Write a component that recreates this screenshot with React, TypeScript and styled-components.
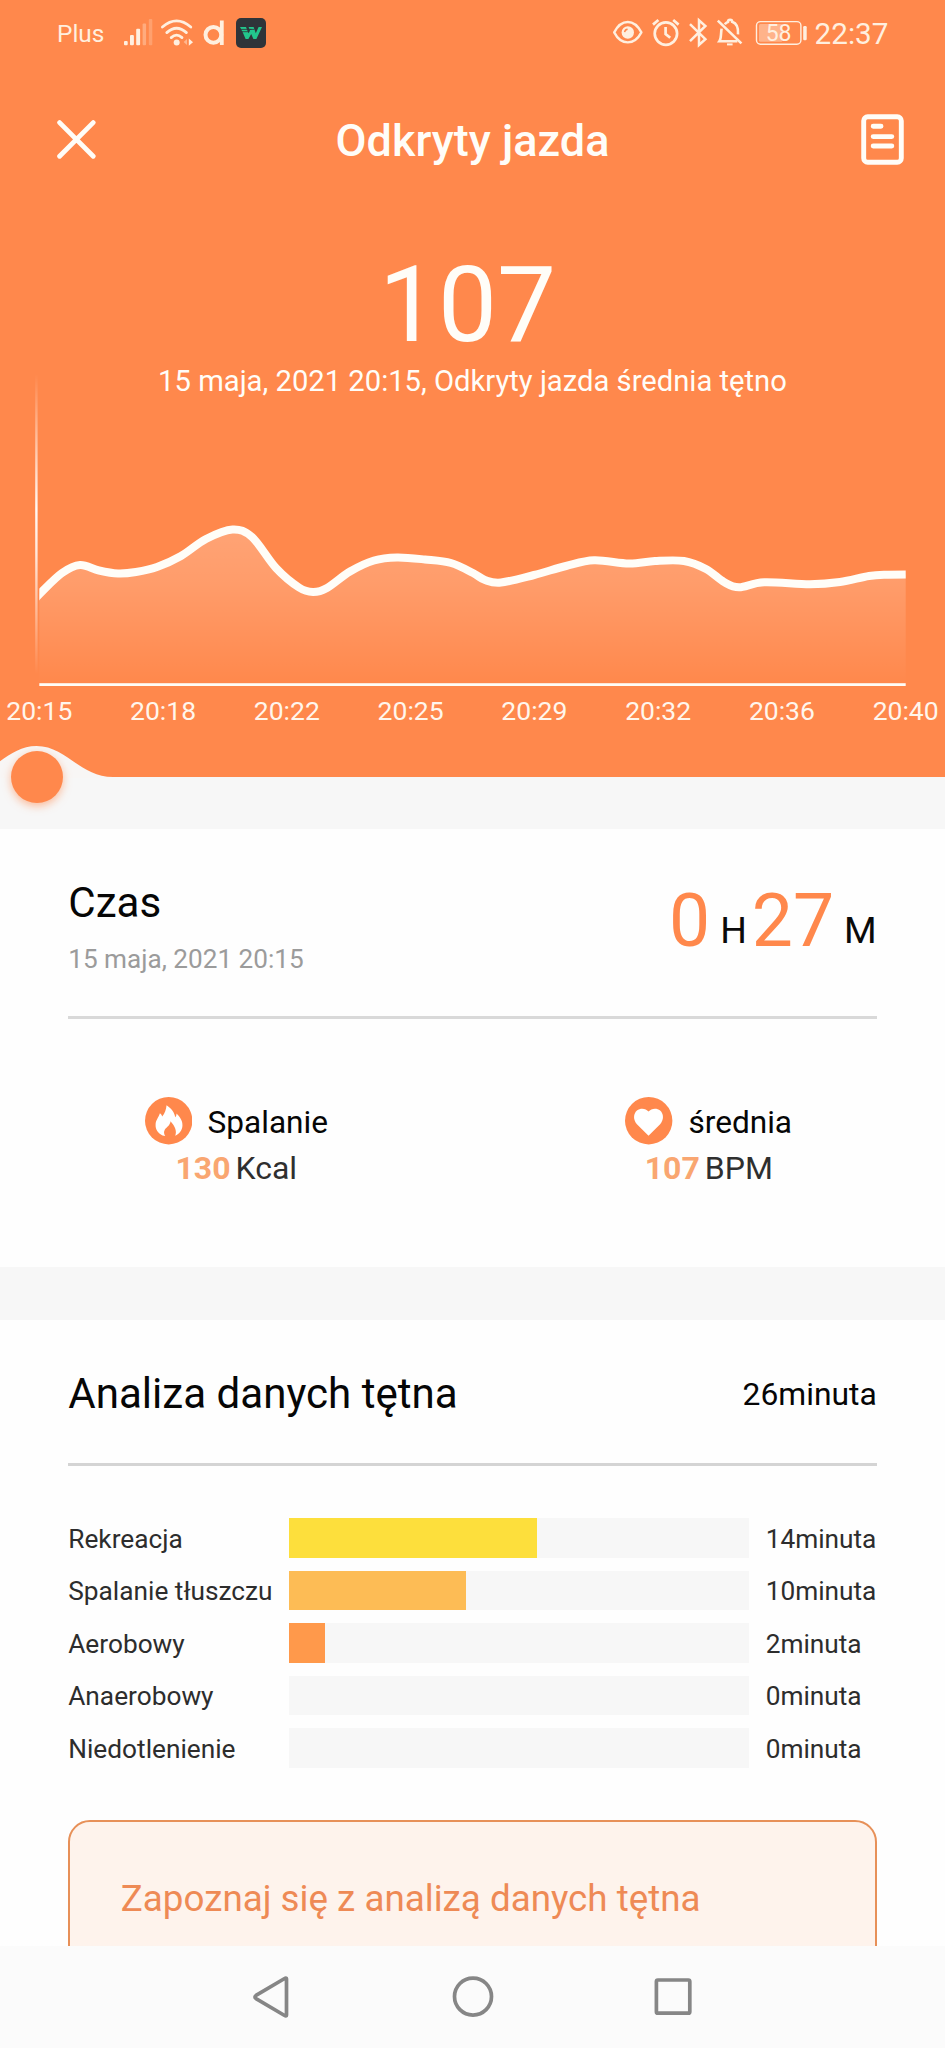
import React from 'react';
import styled, { createGlobalStyle } from 'styled-components';

const ORANGE = '#ff884c';
const STATUS = '#ffefdf';
const WARM_WHITE = '#fffdf8';

const GlobalStyle = createGlobalStyle`
  * { box-sizing: border-box; }
  body {
    margin: 0;
    font-family: Roboto, "Liberation Sans", sans-serif;
    background: #fefefe;
  }
`;

const Screen = styled.div`
  display: flex;
  flex-direction: column;
  width: 945px;
  height: 2048px;
  overflow: hidden;
  background: #fefefe;
`;

/* ---------- hero ---------- */

const Hero = styled.header`
  display: flex;
  flex-direction: column;
  flex: none;
  height: 776.7px;
  background: ${ORANGE};
  color: ${WARM_WHITE};
`;

const StatusBar = styled.div`
  display: flex;
  align-items: center;
  justify-content: space-between;
  height: 66px;
  padding: 0 56.5px 0 57px;
  color: ${STATUS};
`;

const StatusGroup = styled.div`
  display: flex;
  align-items: center;
`;

const StatusText = styled.span<{ $size: number; $gap?: number }>`
  margin-left: ${(p) => p.$gap ?? 0}px;
  padding-top: 1px;
  font-size: ${(p) => p.$size}px;
  line-height: 34px;
`;

const StatusIcon = styled.svg<{ $gap: number }>`
  display: block;
  flex: none;
  margin-left: ${(p) => p.$gap}px;
  overflow: visible;
`;

const TitleBar = styled.div`
  display: grid;
  grid-template-columns: 120px 1fr 120px;
  align-items: center;
  height: 147px;
`;

const IconButton = styled.button<{ $end?: boolean }>`
  display: flex;
  justify-content: ${(p) => (p.$end ? 'flex-end' : 'flex-start')};
  padding: ${(p) => (p.$end ? '0 41.5px 0 0' : '0 0 0 57px')};
  border: 0;
  background: none;
  color: inherit;
`;

const Title = styled.h1`
  margin: 0;
  padding-top: 3px;
  font-size: 45px;
  font-weight: 500;
  line-height: 54px;
  text-align: center;
`;

const BigValue = styled.div`
  margin-top: 35px;
  padding-right: 10px;
  font-size: 105px;
  line-height: 116px;
  text-align: center;
`;

const Caption = styled.div`
  font-size: 29.2px;
  line-height: 34px;
  text-align: center;
  white-space: nowrap;
`;

const ChartSvg = styled.svg`
  display: block;
  flex: none;
  overflow: visible;
`;

const AxisLabels = styled.div`
  display: flex;
  justify-content: space-between;
  margin-top: 6px;
  padding: 0 6.3px;
  font-size: 26.5px;
  line-height: 34px;
  color: #fff6ec;
`;

/* ---------- scrubber ---------- */

const Band = styled.div<{ $height: number }>`
  position: relative;
  flex: none;
  height: ${(p) => p.$height}px;
  background: #f7f7f7;
`;

const Bump = styled.svg`
  position: absolute;
  left: 0;
  top: -31px;
`;

const Knob = styled.div`
  position: absolute;
  left: 10.8px;
  top: -25.8px;
  width: 52.2px;
  height: 52.2px;
  border-radius: 50%;
  background: ${ORANGE};
  box-shadow: 0 3px 8px rgba(255, 136, 76, 0.55);
`;

/* ---------- sections ---------- */

const Section = styled.section<{ $height: number }>`
  flex: none;
  height: ${(p) => p.$height}px;
  padding: 0 68.25px;
  overflow: hidden;
`;

const Summary = styled.div`
  display: flex;
  justify-content: space-between;
  height: 190px;
  border-bottom: 3px solid #d9d9d9;
`;

const SummaryText = styled.div`
  display: flex;
  flex-direction: column;
  gap: 13px;
  padding-top: 49px;
`;

const Heading = styled.h2`
  margin: 0;
  font-size: 42.1px;
  font-weight: 400;
  line-height: 50px;
  color: #060606;
`;

const DateText = styled.div`
  font-size: 26.15px;
  line-height: 36px;
  color: #9b9b9b;
`;

const Duration = styled.div`
  display: flex;
  align-items: flex-end;
  height: 74px;
  margin-top: 54.5px;
`;

const DurationNumber = styled.span`
  font-size: 73.2px;
  line-height: 74px;
  color: ${ORANGE};
`;

const DurationUnit = styled.span<{ $gap: number }>`
  margin: 0 ${(p) => p.$gap}px 9px 10px;
  font-size: 37.4px;
  line-height: 38px;
  color: #0a0a0a;
`;

const Stats = styled.div`
  display: grid;
  grid-template-columns: 1fr 1fr;
  margin: 0 -68.25px;
  padding-top: 78px;
`;

const Stat = styled.div`
  display: flex;
  flex-direction: column;
  align-items: center;
  gap: 4px;
`;

const StatLabel = styled.div`
  display: flex;
  align-items: center;
  gap: 15.6px;
  height: 47.5px;
  font-size: 31.6px;
  color: #060606;

  span { padding-top: 3px; }
`;

const StatValue = styled.div`
  display: flex;
  gap: 5px;
  font-size: 32px;
  line-height: 38px;
  color: #2f2f2f;

  b { color: #f9a671; }
`;

const AnalysisHeader = styled.div`
  display: flex;
  align-items: center;
  justify-content: space-between;
  height: 146px;
  padding-top: 5px;
  border-bottom: 3px solid #d4d4d4;
`;

const Total = styled.div`
  font-size: 31.8px;
  line-height: 38px;
  color: #060606;
`;

const Zones = styled.div`
  display: flex;
  flex-direction: column;
  gap: 13.1px;
  padding-top: 52.3px;
`;

const Zone = styled.div`
  display: grid;
  grid-template-columns: 221px 460px 1fr;
  align-items: center;
  height: 39.4px;
  font-size: 26.25px;
  line-height: 34px;
  white-space: nowrap;
  color: #2d2d2d;
`;

const ZoneName = styled.span`
  padding-top: 2px;
`;

const Track = styled.div`
  height: 39.4px;
  background: #f7f7f7;
`;

const Fill = styled.div<{ $color: string }>`
  height: 100%;
  background: ${(p) => p.$color};
`;

const Minutes = styled.span`
  padding: 2px 0 0 16.4px;
`;

const Tip = styled.div`
  height: 320px;
  margin-top: 52.6px;
  padding: 54px 50.6px;
  border: 2px solid #e79058;
  border-radius: 22px;
  background: #fef3ec;
  font-size: 36.75px;
  line-height: 46px;
  color: #ee8a55;
`;

/* ---------- navigation ---------- */

const NavBar = styled.nav`
  display: flex;
  align-items: center;
  justify-content: center;
  gap: 159px;
  flex: 1;
  background: #fbfbfb;
`;

const NavIcon = styled.svg`
  fill: none;
  stroke: #868686;
  stroke-width: 3.7;
  stroke-linejoin: round;
`;

type Point = [number, number];

const heartRate: Point[] = [
  [36, 598], [42, 591.5], [62, 573], [80, 565], [99, 570.5], [118, 573.5], [136, 572], [157, 567], [181, 556], [206, 539],
  [232.5, 529.5], [252, 537], [276, 568], [299, 587.5], [313, 592], [327, 588], [350, 571.5], [374, 560.5], [397, 557.5],
  [425, 559.5], [451, 563], [473, 573], [485, 580], [501, 582.5], [534, 575], [566, 566], [594, 560.3], [629, 563.5], [655, 561],
  [684, 561], [706, 569], [724, 582], [739, 587.3], [764, 582.3], [810, 584.2], [840, 582], [869, 576], [888, 574.7], [912, 574.5],
];

/* Catmull-Rom spline through the samples, as cubic segments. */
function smooth(points: Point[]) {
  let d = `M${points[0][0]} ${points[0][1]}`;
  for (let i = 0; i < points.length - 1; i++) {
    const a = points[Math.max(i - 1, 0)];
    const b = points[i];
    const c = points[i + 1];
    const e = points[Math.min(i + 2, points.length - 1)];
    d += `C${b[0] + (c[0] - a[0]) / 6} ${b[1] + (c[1] - a[1]) / 6} ${c[0] - (e[0] - b[0]) / 6} ${c[1] - (e[1] - b[1]) / 6} ${c[0]} ${c[1]}`;
  }
  return d;
}

function HeartRateChart() {
  const line = smooth(heartRate);
  return (
    <ChartSvg width="945" height="290" viewBox="0 398 945 290">
      <defs>
        <linearGradient id="area" gradientUnits="userSpaceOnUse" x1="0" y1="530" x2="0" y2="684">
          <stop offset="0" stopColor="#fff" stopOpacity="0.23" />
          <stop offset="0.35" stopColor="#fff" stopOpacity="0.17" />
          <stop offset="1" stopColor="#fff" stopOpacity="0" />
        </linearGradient>
        <linearGradient id="cursor" gradientUnits="userSpaceOnUse" x1="0" y1="374" x2="0" y2="674">
          <stop offset="0" stopColor="#fff" stopOpacity="0" />
          <stop offset="0.45" stopColor="#fff" stopOpacity="0.95" />
          <stop offset="0.6" stopColor="#fff" stopOpacity="0.8" />
          <stop offset="1" stopColor="#fff" stopOpacity="0" />
        </linearGradient>
        <clipPath id="plot"><rect x="39.3" y="500" width="866.4" height="186" /></clipPath>
      </defs>
      <rect x="35.2" y="374" width="2.4" height="300" fill="url(#cursor)" />
      <g clipPath="url(#plot)">
        <path d={`${line}L912 686L36 686Z`} fill="url(#area)" />
        <path d={line} fill="none" stroke={WARM_WHITE} strokeWidth="8" />
      </g>
      <rect x="39.3" y="683.2" width="866.4" height="2.8" fill={WARM_WHITE} />
    </ChartSvg>
  );
}

function SignalIcon() {
  return (
    <StatusIcon $gap={18.6} width="30" height="30" viewBox="123 18 30 30" fill={STATUS}>
      <rect x="124" y="41" width="3.7" height="4.3" rx="1" />
      <rect x="130" y="35" width="3.9" height="10.3" rx="1" />
      <rect x="136.2" y="28.7" width="3.9" height="16.6" rx="1" />
      <rect x="142.6" y="23.5" width="3.5" height="21.8" rx="1" opacity="0.34" />
      <rect x="148.8" y="19" width="3.5" height="26.3" rx="1" opacity="0.24" />
    </StatusIcon>
  );
}

function WifiIcon() {
  return (
    <StatusIcon $gap={7} width="34" height="30" viewBox="160 18 34 30" fill="none" stroke={STATUS} strokeWidth="2.8" strokeLinecap="round">
      <path d="M162.4 27 Q176.6 14.8 190.8 27" />
      <path d="M166.8 32.6 Q176.6 23.8 186.4 32.6" />
      <path d="M171.2 37.6 Q176.6 32.6 182 37.6" />
      <circle cx="176.7" cy="42.6" r="3" fill={STATUS} stroke="none" />
      <path d="M187 39v6l-3.4-3z" fill={STATUS} stroke="none" opacity="0.45" />
      <path d="M188.8 38.6v7.2l4.2-3.6z" fill={STATUS} stroke="none" />
    </StatusIcon>
  );
}

function StatusIcons() {
  return (
    <StatusBar>
      <StatusGroup>
        <StatusText $size={24.4}>Plus</StatusText>
        <SignalIcon />
        <WifiIcon />
        <StatusIcon $gap={9} width="22" height="30" viewBox="203 18 22 30" fill="none" stroke={STATUS} strokeWidth="4">
          <circle cx="213.4" cy="34.8" r="7.9" />
          <path d="M221.8 20.5V45" strokeWidth="3.8" />
        </StatusIcon>
        <StatusIcon $gap={11} width="30" height="30" viewBox="0 0 30 30">
          <rect width="30" height="30" rx="5" fill="#2f3439" />
          <g fill="#22c58c">
            <path d="M4 9H10L12.4 15.2 14 12.6 12.6 9H17.6L19.8 15.2 22.6 9H26L20.4 21H17.4L15.2 16 12.4 21H9.6L6.8 14.6Z" />
          </g>
          <path d="M3 11.4h12.5M4.4 13.7h9M13.4 11.4h5" stroke="#2f3439" strokeWidth="0.8" />
        </StatusIcon>
      </StatusGroup>
      <StatusGroup>
        <StatusIcon $gap={0} width="32" height="30" viewBox="612 18 32 30" fill="none" stroke={STATUS} strokeWidth="2.4">
          <path d="M614.2 32.4C617.5 26 622 22 627.8 22S638 26 641.4 32.4C638 38.8 633.6 42.4 627.8 42.4S617.5 38.8 614.2 32.4Z" strokeLinejoin="round" />
          <circle cx="627.8" cy="32.5" r="6.2" fill={STATUS} stroke="none" />
          <path d="M624.6 32.2a3.4 3.4 0 0 1 3-3" stroke={ORANGE} strokeWidth="1.5" />
        </StatusIcon>
        <StatusIcon $gap={8} width="28" height="30" viewBox="652 18 28 30" fill="none" stroke={STATUS} strokeWidth="2.7">
          <circle cx="665.9" cy="33.6" r="11.2" />
          <path d="M665.6 27v7l4.6 3.8M653 24.6l5.4-4.6M678.6 24.6 673.2 20" />
        </StatusIcon>
        <StatusIcon $gap={9} width="19" height="30" viewBox="689 18 19 30" fill="none" stroke={STATUS} strokeWidth="2.5">
          <path d="M690 24.2 705.4 39.2 699 45V20.2L705.4 26 690 41.2" />
        </StatusIcon>
        <StatusIcon $gap={8} width="26" height="30" viewBox="716 18 26 30" fill="none" stroke={STATUS} strokeWidth="2.6">
          <path d="M717.8 20.6 741.4 43.4" />
          <path d="M721.6 28.6C720.6 35 721.4 38.4 719.4 41.2H737.4" />
          <path d="M724.8 24.4C726 22.6 727.4 22.2 728 21.8C728 19 732.2 19 732.2 21.8C737.6 23.6 738.4 29 738 34.4" />
          <path d="M727 44.4h5.6" strokeWidth="2" />
        </StatusIcon>
        <StatusIcon $gap={13} width="52" height="30" viewBox="755 18 52 30">
          <rect x="756.5" y="21.6" width="44.4" height="22.6" rx="4" fill="none" stroke={STATUS} strokeWidth="1.4" />
          <rect x="759" y="24" width="23.4" height="17.8" rx="1.5" fill={STATUS} opacity="0.42" />
          <rect x="803.2" y="26" width="3.5" height="14.2" rx="1.2" fill={STATUS} />
          <text x="765.7" y="40.6" fontSize="23" fill={STATUS}>58</text>
        </StatusIcon>
        <StatusText $size={29.7} $gap={7.5}>22:37</StatusText>
      </StatusGroup>
    </StatusBar>
  );
}

function FlameBadge() {
  return (
    <svg width="47.4" height="47.4" viewBox="0 0 143 143">
      <circle cx="71.5" cy="71.5" r="71.5" fill={ORANGE} />
      <path
        d="M53 116C39 109 31 98 32 83C32 70 41 62 45 49C49 52 51 55 52 59C60 49 64 38 65 25C79 34 89 46 91 61C94 59 95 55 95 50C105 60 114 71 113 87C112 101 104 112 91 117C97 104 91 88 77 73C76 85 66 90 60 98C56 105 57 111 61 118Z"
        fill="#fff"
      />
    </svg>
  );
}

function HeartBadge() {
  return (
    <svg width="47.4" height="47.4" viewBox="0 0 143 143">
      <circle cx="71.5" cy="71.5" r="71.5" fill={ORANGE} />
      <path d="M71 117L36 82C24 69 25 51 36 41C47 32 63 34 71 44C79 34 96 32 106 41C117 51 118 69 106 82Z" fill="#fff" />
    </svg>
  );
}

const times = ['20:15', '20:18', '20:22', '20:25', '20:29', '20:32', '20:36', '20:40'];

const zones = [
  { name: 'Rekreacja', minutes: 14, color: '#fddf3c' },
  { name: 'Spalanie tłuszczu', minutes: 10, color: '#fdbc55' },
  { name: 'Aerobowy', minutes: 2, color: '#ff994b' },
  { name: 'Anaerobowy', minutes: 0, color: '#ff884c' },
  { name: 'Niedotlenienie', minutes: 0, color: '#f0643c' },
];
const totalMinutes = zones.reduce((sum, z) => sum + z.minutes, 0);

export default function App() {
  return (
    <>
      <GlobalStyle />
      <Screen>
        <Hero>
          <StatusIcons />
          <TitleBar>
            <IconButton aria-label="Zamknij">
              <svg width="39" height="39" viewBox="0 0 39 39" stroke={WARM_WHITE} strokeWidth="4.8" strokeLinecap="round">
                <path d="M2.6 2.6 36.2 36.2M36.2 2.6 2.6 36.2" />
              </svg>
            </IconButton>
            <Title>Odkryty jazda</Title>
            <IconButton $end aria-label="Raport">
              <svg width="43" height="51" viewBox="0 0 43 51" fill="none" stroke={WARM_WHITE} strokeWidth="4.9" strokeLinecap="round">
                <rect x="2.7" y="2.7" width="37.6" height="45.6" rx="4" />
                <path d="M12.2 12.3H20M12.2 22.6H30.8M12.2 32H30.8" />
              </svg>
            </IconButton>
          </TitleBar>
          <BigValue>107</BigValue>
          <Caption>15 maja, 2021 20:15, Odkryty jazda średnia tętno</Caption>
          <HeartRateChart />
          <AxisLabels>
            {times.map((t) => <span key={t}>{t}</span>)}
          </AxisLabels>
        </Hero>

        <Band $height={52.6}>
          <Bump width="120" height="32" viewBox="0 0 120 32">
            <path d="M-40 31C-7 31 7 0 36.5 0S80 31 113 31V32H-40Z" fill="#f8f6f5" />
          </Bump>
          <Knob />
        </Band>

        <Section $height={437.7}>
          <Summary>
            <SummaryText>
              <Heading>Czas</Heading>
              <DateText>15 maja, 2021 20:15</DateText>
            </SummaryText>
            <Duration>
              <DurationNumber>0</DurationNumber>
              <DurationUnit $gap={5}>H</DurationUnit>
              <DurationNumber>27</DurationNumber>
              <DurationUnit $gap={0}>M</DurationUnit>
            </Duration>
          </Summary>
          <Stats>
            <Stat>
              <StatLabel><FlameBadge /><span>Spalanie</span></StatLabel>
              <StatValue><b>130</b><span>Kcal</span></StatValue>
            </Stat>
            <Stat>
              <StatLabel><HeartBadge /><span>średnia</span></StatLabel>
              <StatValue><b>107</b><span>BPM</span></StatValue>
            </Stat>
          </Stats>
        </Section>

        <Band $height={53} />

        <Section $height={625.8}>
          <AnalysisHeader>
            <Heading>Analiza danych tętna</Heading>
            <Total>{totalMinutes}minuta</Total>
          </AnalysisHeader>
          <Zones>
            {zones.map((z) => (
              <Zone key={z.name}>
                <ZoneName>{z.name}</ZoneName>
                <Track>
                  <Fill $color={z.color} style={{ width: `${(z.minutes / totalMinutes) * 100}%` }} />
                </Track>
                <Minutes>{z.minutes}minuta</Minutes>
              </Zone>
            ))}
          </Zones>
          <Tip>Zapoznaj się z analizą danych tętna</Tip>
        </Section>

        <NavBar>
          <NavIcon width="42" height="42" viewBox="0 0 42 42">
            <path d="M35.5 2.8V39.2C35.5 40 34.5 40 33.6 39.5L5 22.6C3.6 21.6 3.6 20.4 5 19.4L33.6 2.5C34.5 2 35.5 2 35.5 2.8Z" />
          </NavIcon>
          <NavIcon width="42" height="42" viewBox="0 0 42 42">
            <circle cx="21" cy="20.6" r="18.5" />
          </NavIcon>
          <NavIcon width="42" height="42" viewBox="0 0 42 42">
            <rect x="3.4" y="4" width="33.4" height="33.2" rx="1.5" />
          </NavIcon>
        </NavBar>
      </Screen>
    </>
  );
}
